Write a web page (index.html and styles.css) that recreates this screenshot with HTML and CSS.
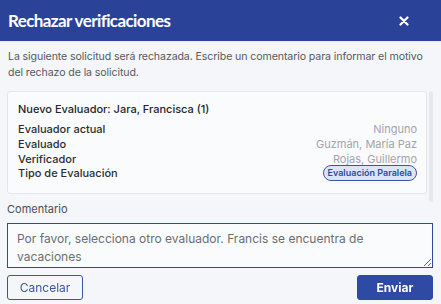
FILE: index.html
```html
<!DOCTYPE html>
<html lang="es">
<head>
<meta charset="utf-8">
<link rel="stylesheet" href="styles.css">
</head>
<body>
<div class="modal">
  <header class="modal-header">
    <h1 class="modal-title">Rechazar verificaciones</h1>
    <button class="close-btn" aria-label="Cerrar">
      <svg width="10" height="10" viewBox="0 0 10 10"><path d="M1.5 1.5 L8.5 8.5 M8.5 1.5 L1.5 8.5" stroke="#fff" stroke-width="2.2" stroke-linecap="round"/></svg>
    </button>
  </header>
  <div class="modal-body">
    <p class="intro">La siguiente solicitud será rechazada. Escribe un comentario para informar el motivo del rechazo de la solicitud.</p>
    <div class="scroll-area">
      <div class="card">
        <div class="card-title">Nuevo Evaluador: Jara, Francisca (1)</div>
        <div class="rows">
          <div class="row"><span class="label">Evaluador actual</span><span class="value">Ninguno</span></div>
          <div class="row"><span class="label">Evaluado</span><span class="value">Guzmán, María Paz</span></div>
          <div class="row"><span class="label">Verificador</span><span class="value">Rojas, Guillermo</span></div>
          <div class="row"><span class="label">Tipo de Evaluación</span><span class="badge">Evaluación Paralela</span></div>
        </div>
      </div>
      <div class="scrollbar"></div>
    </div>
    <label class="field-label" for="comentario">Comentario</label>
    <textarea id="comentario" class="comment">Por favor, selecciona otro evaluador. Francis se encuentra de vacaciones</textarea>
    <div class="actions">
      <button class="btn btn-outline">Cancelar</button>
      <button class="btn btn-primary">Enviar</button>
    </div>
  </div>
</div>
</body>
</html>
```
FILE: styles.css
```css
* { box-sizing: border-box; }
html, body { margin: 0; padding: 0; }
body {
  width: 441px;
  height: 304px;
  background: #f5f6f9;
  font-family: Inter, "Noto Sans", sans-serif;
  overflow: hidden;
}
.modal { display: flex; flex-direction: column; height: 304px; }
.modal-header {
  height: 42px;
  background: #2a4399;
  display: flex;
  align-items: center;
  justify-content: space-between;
  padding: 0 32px 0 8px;
  border-bottom: 1px solid #e8eaf0;
}
.modal-title {
  margin: 0;
  font-family: Lato, sans-serif;
  font-weight: 700;
  font-size: 17px;
  color: #fff;
  letter-spacing: -0.6px;
}
.close-btn {
  background: none; border: 0; padding: 0; width: 10px; height: 10px;
  display: flex;
}
.modal-body { padding: 7px 8px 0 7px; display: flex; flex-direction: column; }
.intro {
  margin: 0 0 0 1px;
  font-size: 10.6px;
  letter-spacing: -0.1px;
  line-height: 16px;
  color: #555a60;
}
.scroll-area { display: flex; margin-top: 10px; height: 111px; gap: 2px; }
.card {
  width: 421px;
  height: 103px;
  background: #fafbfc;
  border: 1px solid #e4e6eb;
  border-radius: 3px;
  padding: 10px 9px 0 10px;
}
.card-title { font-size: 11px; font-weight: 500; color: #23262b; line-height: 14px; }
.rows { margin-top: 6px; }
.row { display: flex; justify-content: space-between; align-items: center; height: 14.7px; }
.label { font-size: 11px; font-weight: 500; color: #2a2d33; }
.value { font-size: 11px; color: #a2a5ab; }
.badge {
  font-size: 9px;
  font-weight: 600;
  color: #2f4aa3;
  background: #dde4f7;
  border: 1px solid #3a54a8;
  border-radius: 8px;
  padding: 2px 4px;
  line-height: 10px;
}
.scrollbar { width: 4px; background: #e6e8ee; border-radius: 2px; height: 111px; }
.field-label { margin-top: 0; font-size: 11px; color: #4a4d53; line-height: 14px; }
.comment {
  margin-top: 7px;
  width: 426px;
  height: 45px;
  resize: vertical;
  border: 1px solid #2e4aa0;
  background: #fafbfd;
  padding: 6px 9px;
  font-family: Inter, "Noto Sans", sans-serif;
  font-size: 12px;
  line-height: 18px;
  color: #6a6d73;
  border-radius: 0;
  outline: none;
}
.actions { display: flex; justify-content: space-between; margin-top: 7px; width: 426px; }
.btn {
  height: 25px;
  width: 76px;
  border-radius: 3px;
  font-family: Inter, "Noto Sans", sans-serif;
  font-size: 12px;
  padding: 0;
}
.btn-outline { background: transparent; border: 1px solid #3a55a8; color: #3a55a8; }
.btn-primary { background: #2e4aa4; border: 1px solid #2e4aa4; color: #fff; font-weight: 700; }
```
